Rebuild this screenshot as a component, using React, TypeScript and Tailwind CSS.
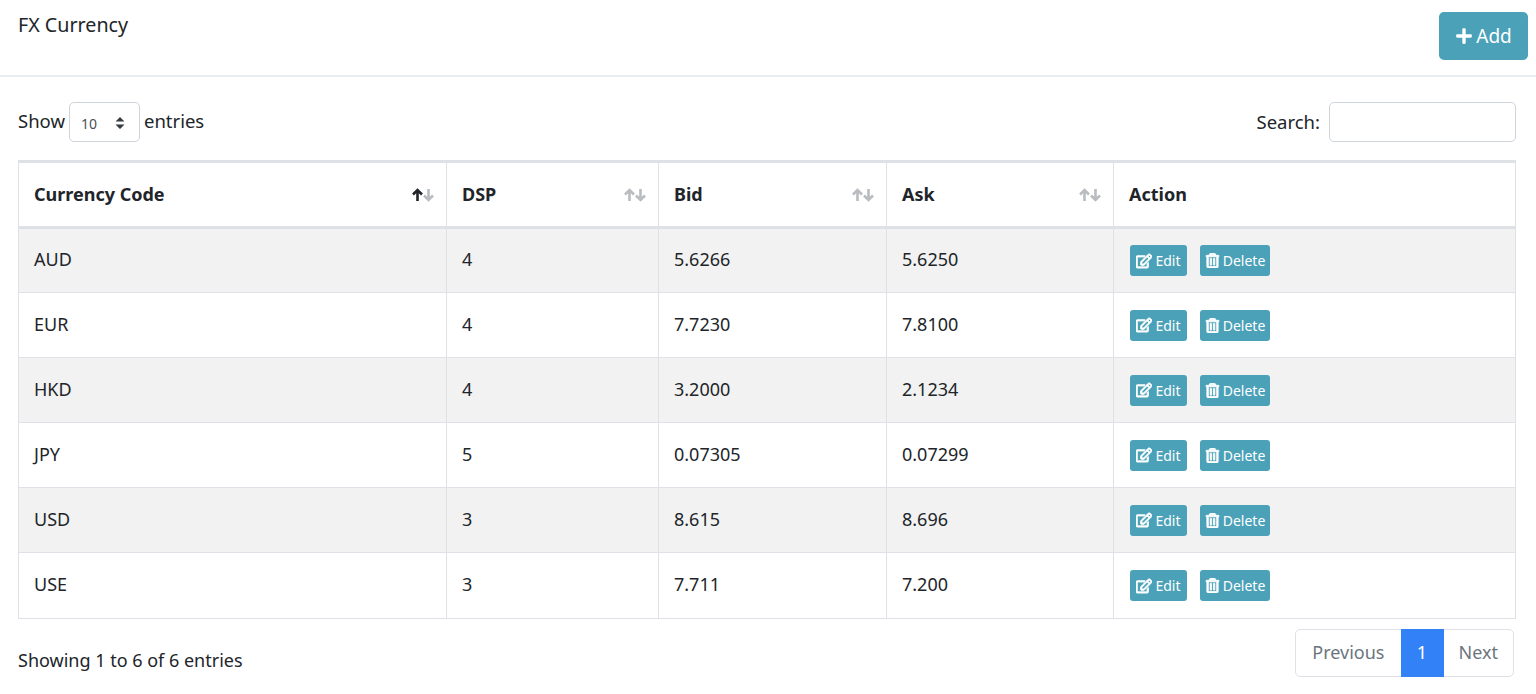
import { FaPlus, FaRegEdit, FaRegTrashAlt } from "react-icons/fa";

const rows = [
  { code: "AUD", dsp: "4", bid: "5.6266", ask: "5.6250" },
  { code: "EUR", dsp: "4", bid: "7.7230", ask: "7.8100" },
  { code: "HKD", dsp: "4", bid: "3.2000", ask: "2.1234" },
  { code: "JPY", dsp: "5", bid: "0.07305", ask: "0.07299" },
  { code: "USD", dsp: "3", bid: "8.615", ask: "8.696" },
  { code: "USE", dsp: "3", bid: "7.711", ask: "7.200" },
];

function Arrow({ up, dark }: { up?: boolean; dark?: boolean }) {
  return (
    <svg
      viewBox="0 0 12 14"
      className={["h-[14px] w-[13px]", up ? "" : "rotate-180", dark ? "text-[#212529]" : "text-[#b9bcc0]"].join(" ")}
      fill="none"
      stroke="currentColor"
      strokeWidth="2.6"
    >
      <path d="M6 13V2M1.5 6.5 6 2l4.5 4.5" />
    </svg>
  );
}

function SortHead({ label, active }: { label: string; active?: boolean }) {
  return (
    <th className="border-x border-[#dee2e6] px-[15px] text-left align-middle text-[18px] font-bold">
      <div className="flex items-center justify-between">
        <span>{label}</span>
        <span className="mr-[-4px] flex">
          <Arrow up dark={active} />
          <span className="ml-[-2px]">
            <Arrow />
          </span>
        </span>
      </div>
    </th>
  );
}

function ActionButton({ label, icon, width }: { label: string; icon: React.ReactNode; width: string }) {
  return (
    <button className={["flex h-[31px] items-center justify-center gap-[3px] rounded-[3px] bg-[#4ba1b7] text-[14px] text-white", width].join(" ")}>
      {icon}
      {label}
    </button>
  );
}

export default function App() {
  return (
    <div className="h-[694px] overflow-hidden bg-white font-['Noto_Sans',sans-serif] text-[18px] text-[#212529]">
      <div className="flex h-[77px] justify-between border-b-2 border-[#e9ecef] pl-[18px] pr-[8px] pt-[12px]">
        <h1 className="text-[19.7px] leading-[26px]">FX Currency</h1>
        <button className="flex h-[48px] w-[89px] items-center justify-center gap-[3px] rounded-[5px] bg-[#4ba1b7] text-[19px] text-white">
          <FaPlus className="text-[18px]" />
          Add
        </button>
      </div>

      <div className="pl-[18px] pr-[20px]">
        <div className="flex items-center justify-between pt-[25px]">
          <div className="flex items-center gap-[4px]">
            <span className="pb-[3px] text-[18.5px]">Show</span>
            <div className="flex h-[40px] w-[71px] items-center justify-between rounded-[5px] border border-[#ced4da] pl-[11px] pr-[14px] pt-[2px] text-[14px] text-[#495057]">
              10
              <svg viewBox="0 0 10 14" className="h-[14px] w-[10px] fill-[#343a40]">
                <path d="M5 1 9.5 5.5H.5zM5 13 .5 8.5h9z" />
              </svg>
            </div>
            <span className="pb-[3px] text-[18.5px]">entries</span>
          </div>
          <div className="flex items-center gap-[9px]">
            <span className="pb-[1px] text-[18.5px]">Search:</span>
            <input className="h-[40px] w-[187px] rounded-[5px] border border-[#ced4da]" />
          </div>
        </div>

        <table className="mt-[18px] w-[1498px] table-fixed border-collapse">
          <colgroup>
            <col className="w-[428px]" />
            <col className="w-[212px]" />
            <col className="w-[228px]" />
            <col className="w-[227px]" />
            <col />
          </colgroup>
          <thead>
            <tr className="h-[66px] border-y-[3px] border-[#dee2e6]">
              <SortHead label="Currency Code" active />
              <SortHead label="DSP" />
              <SortHead label="Bid" />
              <SortHead label="Ask" />
              <th className="border-x border-[#dee2e6] px-[15px] text-left text-[18px] font-bold">Action</th>
            </tr>
          </thead>
          <tbody>
            {rows.map((row, i) => (
              <tr key={row.code} className={["h-[65.1px] border-b border-[#dee2e6]", i % 2 === 0 ? "bg-[#f2f2f2]" : "bg-white"].join(" ")}>
                <td className="border-x border-[#dee2e6] px-[15px] pb-[2px]">{row.code}</td>
                <td className="border-x border-[#dee2e6] px-[15px] pb-[2px]">{row.dsp}</td>
                <td className="border-x border-[#dee2e6] px-[15px] pb-[2px]">{row.bid}</td>
                <td className="border-x border-[#dee2e6] px-[15px] pb-[2px]">{row.ask}</td>
                <td className="border-x border-[#dee2e6] pl-[16px] pr-[15px]">
                  <div className="flex gap-[13px]">
                    <ActionButton label="Edit" width="w-[57px]" icon={<FaRegEdit className="text-[16px] [stroke-width:30]" />} />
                    <ActionButton label="Delete" width="w-[70px]" icon={<FaRegTrashAlt className="text-[15px] [stroke-width:30]" />} />
                  </div>
                </td>
              </tr>
            ))}
          </tbody>
        </table>

        <div className="flex items-start justify-between pt-[10px]">
          <div className="pt-[18px] leading-[26px]">Showing 1 to 6 of 6 entries</div>
          <div className="mr-[2px] flex h-[48px] items-center rounded-[5px] border border-[#dee2e6] text-[#6c757d]">
            <span className="px-[16px]">Previous</span>
            <span className="flex h-[48px] w-[43px] items-center justify-center bg-[#3381f6] text-white">1</span>
            <span className="px-[15px]">Next</span>
          </div>
        </div>
      </div>
    </div>
  );
}
